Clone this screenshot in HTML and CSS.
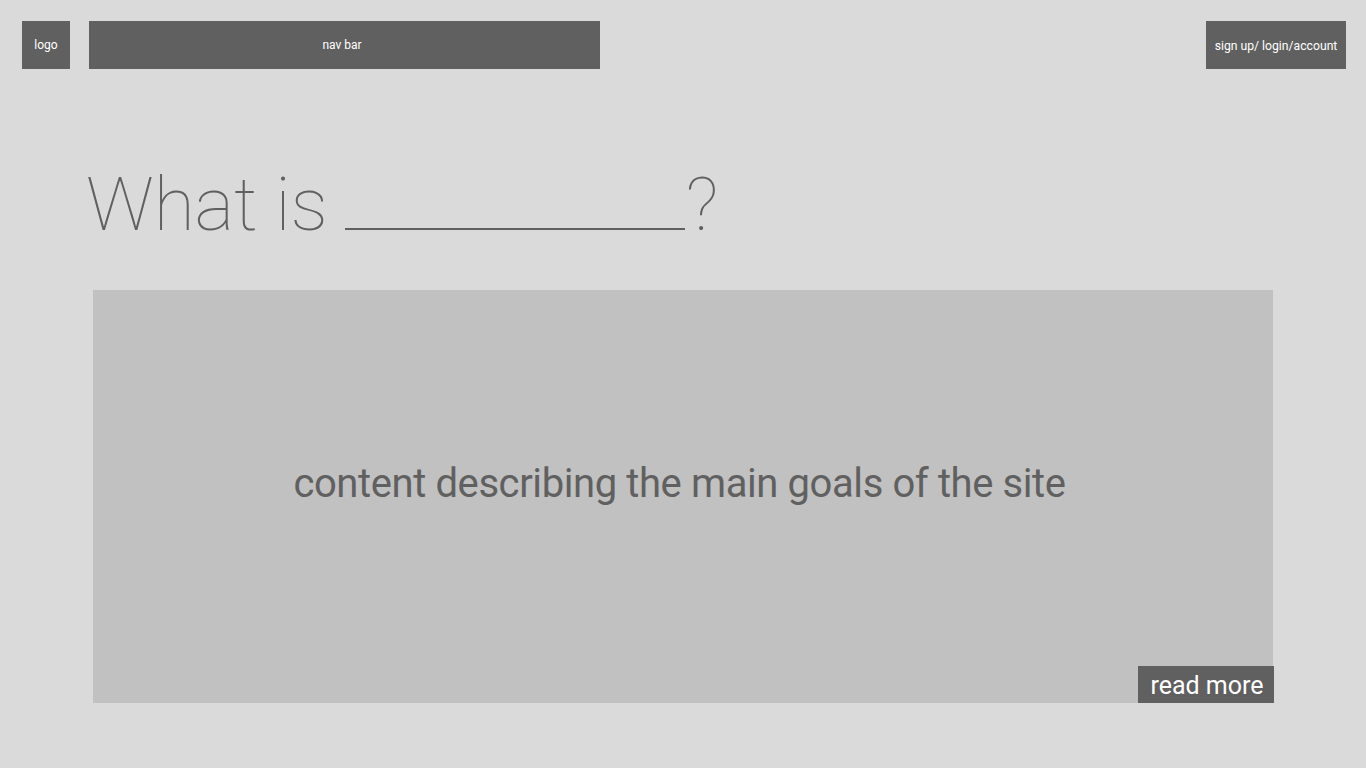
FILE: index.html
```html
<!DOCTYPE html>
<html>
<head>
<meta charset="utf-8">
<link rel="stylesheet" href="styles.css">
</head>
<body>
<header class="top">
  <div class="logo box">logo</div>
  <nav class="nav box">nav bar</nav>
  <div class="account box">sign up/ login/account</div>
</header>
<main class="main">
  <h1 class="title">What is <span class="blank"></span>?</h1>
  <section class="hero">
    <p class="hero-text">content describing the main goals of the site</p>
    <a class="more">read more</a>
  </section>
</main>
</body>
</html>
```

FILE: styles.css
```css
html, body {
  margin: 0;
  padding: 0;
}
body {
  background: #dadada;
  font-family: Roboto, "Liberation Sans", sans-serif;
  width: 1366px;
  height: 768px;
  overflow: hidden;
}
.top {
  display: flex;
  align-items: flex-start;
  padding: 21px 20px 0 22px;
}
.box {
  background: #606060;
  color: #ffffff;
  height: 48px;
  display: flex;
  align-items: center;
  justify-content: center;
  font-size: 12px;
}
.logo {
  width: 48px;
  margin-right: 19px;
}
.nav {
  width: 511px;
  padding-right: 5px;
  box-sizing: border-box;
}
.account {
  width: 140px;
  margin-left: auto;
  font-size: 12.2px;
  padding-top: 2px;
  box-sizing: border-box;
}
.main {
  padding-left: 93px;
}
.title {
  margin: 90px 0 0 -7px;
  font-weight: 100;
  font-size: 75px;
  line-height: 90px;
  color: #606060;
  height: 131px;
  letter-spacing: -0.2px;
}
.blank {
  display: inline-block;
  width: 340px;
  height: 0;
  border-bottom: 2px solid #606060;
  vertical-align: baseline;
  margin-left: 0;
  margin-right: 0;
}
.hero {
  position: relative;
  width: 1180px;
  height: 413px;
  background: #c1c1c1;
  display: flex;
  align-items: center;
  justify-content: center;
}
.hero-text {
  margin: 0 7px 27px 0;
  font-size: 40px;
  color: #606060;
  letter-spacing: -0.4px;
}
.more {
  position: absolute;
  right: -1px;
  bottom: 0;
  width: 136px;
  height: 37px;
  background: #606060;
  color: #ffffff;
  font-size: 25px;
  display: flex;
  align-items: center;
  justify-content: center;
  padding: 2px 0 0 2px;
  box-sizing: border-box;
}
```
